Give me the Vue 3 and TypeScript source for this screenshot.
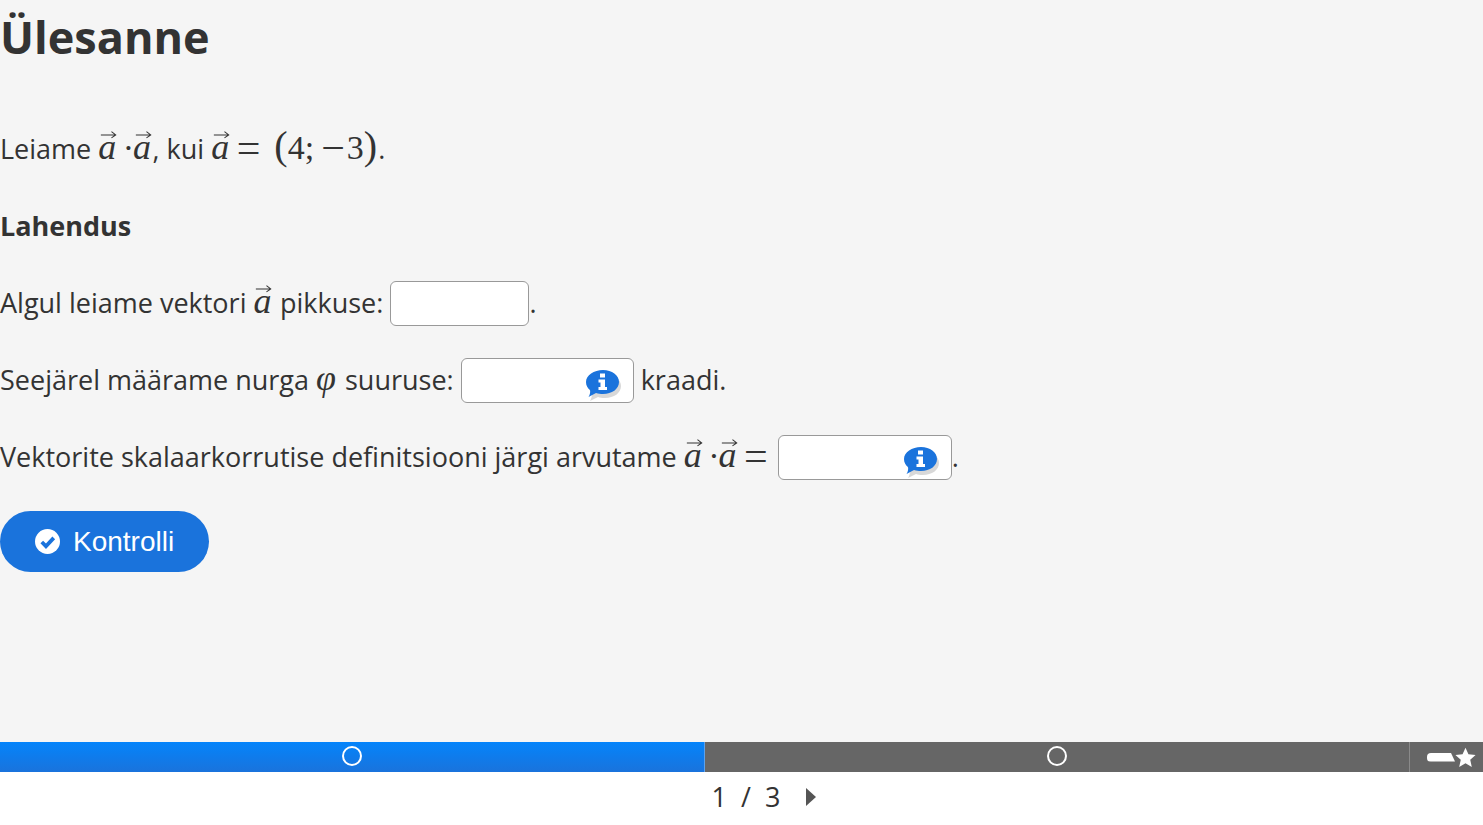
<template>
  <div class="page">
    <main class="content">
      <h1>Ülesanne</h1>

      <p class="line first">
        Leiame
        <span class="math">
          <span class="vec">a<svg viewBox="0 0 20 10"><path d="M1 5.500H18M13.500 1.500 18.500 5.500 13.500 9" /></svg></span>
          <span class="dot">·</span><span class="vec">a<svg viewBox="0 0 20 10"><path d="M1 5.500H18M13.500 1.500 18.500 5.500 13.500 9" /></svg></span></span>, kui
        <span class="math">
          <span class="vec">a<svg viewBox="0 0 20 10"><path d="M1 5.500H18M13.500 1.500 18.500 5.500 13.500 9" /></svg></span>
          <span class="eq">=</span>
          <span class="paren">(</span>4;<span class="minus">−</span>3<span class="paren close">)</span></span>.
      </p>

      <p class="line"><strong>Lahendus</strong></p>

      <p class="line">
        Algul leiame vektori
        <span class="math"><span class="vec">a<svg viewBox="0 0 20 10"><path d="M1 5.500H18M13.500 1.500 18.500 5.500 13.500 9" /></svg></span></span>
        pikkuse:
        <input class="answer short" type="text" /><span>.</span>
      </p>

      <p class="line">
        Seejärel määrame nurga <span class="math"><i class="phi">φ</i></span> suuruse:
        <span class="answer-wrap">
          <input class="answer" type="text" />
          <svg class="info" viewBox="0 0 36 32">
            <path class="info-shadow" d="M20 5C29 5 36 10 36 17S29 29 20 29C17 29 15 28.600 13 28L5 32C6.500 29.500 7 27 7 25C5 23 4 20 4 17 4 10 11 5 20 5Z" />
            <path class="info-bubble" d="M18 1C27 1 34 6 34 13S27 25 18 25C15.500 25 13.500 24.600 11 24L3.500 28C5 25.500 5.500 23 5 21 2.500 19 1 16.500 1 13 1 6 9 1 18 1Z" />
            <path class="info-mark" d="M15 4.500H20V8.500H15ZM13.500 10.500H20V18H22V21H13.500V18H15.500V13.500H13.500Z" />
          </svg>
        </span>
        kraadi.
      </p>

      <p class="line">
        Vektorite skalaarkorrutise definitsiooni järgi arvutame
        <span class="math">
          <span class="vec">a<svg viewBox="0 0 20 10"><path d="M1 5.500H18M13.500 1.500 18.500 5.500 13.500 9" /></svg></span>
          <span class="dot">·</span><span class="vec">a<svg viewBox="0 0 20 10"><path d="M1 5.500H18M13.500 1.500 18.500 5.500 13.500 9" /></svg></span>
          <span class="eq end">=</span></span>
        <span class="answer-wrap">
          <input class="answer wide" type="text" />
          <svg class="info" viewBox="0 0 36 32">
            <path class="info-shadow" d="M20 5C29 5 36 10 36 17S29 29 20 29C17 29 15 28.600 13 28L5 32C6.500 29.500 7 27 7 25C5 23 4 20 4 17 4 10 11 5 20 5Z" />
            <path class="info-bubble" d="M18 1C27 1 34 6 34 13S27 25 18 25C15.500 25 13.500 24.600 11 24L3.500 28C5 25.500 5.500 23 5 21 2.500 19 1 16.500 1 13 1 6 9 1 18 1Z" />
            <path class="info-mark" d="M15 4.500H20V8.500H15ZM13.500 10.500H20V18H22V21H13.500V18H15.500V13.500H13.500Z" />
          </svg>
        </span><span>.</span>
      </p>

      <button class="check" type="button" @click="checked++">
        <svg viewBox="0 0 24 24">
          <circle cx="12" cy="12" r="12" fill="#fff" />
          <path d="M6.500 12.500 10.500 16.500 18 8.500" fill="none" stroke="#1a73dc" stroke-width="3.600" />
        </svg>
        Kontrolli
      </button>
    </main>

    <div class="progress">
      <div v-for="(step, i) in steps" :key="i" class="step" :class="{ active: i === current }">
        <span class="ring"></span>
      </div>
      <div class="reward">
        <span class="pill"></span>
        <svg viewBox="0 0 20 20"><path d="M10 .8 12.800 7 19.600 7.700 14.500 12.200 16 19 10 15.500 4 19 5.500 12.200 .4 7.700 7.200 7Z" /></svg>
      </div>
    </div>

    <nav class="pager">
      <span>{{ current + 1 }}</span>
      <span>/</span>
      <span>{{ total }}</span>
      <svg viewBox="0 0 10 18"><path d="M0 0 10 9 0 18Z" /></svg>
    </nav>
  </div>
</template>

<script setup lang="ts">
import { ref } from 'vue'

const steps = ref(['a', 'b'])
const current = ref(0)
const total = 3
const checked = ref(0)
</script>

<style>
html,
body {
  margin: 0;
  background: #fff;
}
</style>

<style scoped>
.page {
  display: flex;
  flex-direction: column;
  height: 825px;
  overflow: hidden;
  font-family: "Open Sans", sans-serif;
  color: #333;
}

.content {
  flex: 1;
  background: #f5f5f5;
}

h1 {
  margin: 0;
  height: 74px;
  font-size: 45px;
  line-height: 74px;
  font-weight: 700;
}

.line {
  height: 45px;
  margin: 0 0 32px;
  font-size: 27px;
  line-height: 45px;
  white-space: nowrap;
}

.line.first {
  margin-top: 52px;
}

strong {
  font-weight: 700;
}

.math {
  font-family: "Liberation Serif", serif;
  font-size: 34px;
  line-height: 0;
}

.vec {
  position: relative;
  display: inline-block;
  margin-right: 1.500px;
  font-size: 36px;
  font-style: italic;
  line-height: 0;
}

.vec svg {
  position: absolute;
  left: 2px;
  top: -17px;
  width: 17px;
  height: 9px;
}

.vec path {
  fill: none;
  stroke: #333;
  stroke-width: 1.200;
}

.dot {
  margin: 0 -1px 0 5px;
}

.eq {
  position: relative;
  top: 3px;
  margin: 0 14px 0 6px;
  font-size: 42px;
  line-height: 0;
  font-weight: 400;
}

.eq.end {
  margin-right: 10px;
}

.minus {
  position: relative;
  top: 3px;
  margin: 0 2px 0 7px;
  font-size: 42px;
  line-height: 0;
}

.phi {
  margin-right: 2px;
  font-size: 36px;
}

.paren {
  font-size: 40px;
  line-height: 0;
}

.paren.close {
  margin-right: 1px;
}

.answer {
  box-sizing: border-box;
  width: 173px;
  height: 45px;
  margin-bottom: 4px;
  padding: 0 8px;
  vertical-align: middle;
  background: #fff;
  border: 1px solid #999;
  border-radius: 6px;
  outline: none;
}

.answer.short {
  width: 139px;
}

.answer.wide {
  width: 174px;
}

.answer-wrap {
  position: relative;
  display: inline-block;
  line-height: 0;
  vertical-align: middle;
}

.info {
  position: absolute;
  right: 13px;
  top: 11px;
  width: 36px;
  height: 32px;
}

.info-shadow {
  fill: #d8d8d8;
}

.info-bubble {
  fill: #1a73dc;
}

.info-mark {
  fill: #fff;
}

.check {
  display: flex;
  align-items: center;
  gap: 13px;
  width: 209px;
  height: 61px;
  padding: 0 0 0 35px;
  border: 0;
  border-radius: 31px;
  background: #1a73dc;
  color: #fff;
  font-family: "Liberation Sans", sans-serif;
  font-size: 28px;
  cursor: pointer;
}

.check svg {
  width: 25px;
  height: 25px;
}

.progress {
  display: flex;
  height: 30px;
  background: #666;
}

.step {
  display: flex;
  flex: none;
  align-items: center;
  justify-content: center;
  box-sizing: border-box;
  width: 705px;
  padding-bottom: 2px;
  border-right: 1px solid #8a8a8a;
}

.step.active {
  background: linear-gradient(#0484fb, #1a73dc);
  border-right-color: #5ba2ee;
}

.ring {
  box-sizing: border-box;
  width: 20px;
  height: 20px;
  border: 2px solid #fff;
  border-radius: 50%;
}

.reward {
  display: flex;
  flex: 1;
  align-items: center;
  padding-left: 17px;
}

.pill {
  width: 28px;
  height: 9px;
  border-radius: 4px 0 0 4px;
  background: #fff;
  clip-path: polygon(0 0, 85% 0, 100% 100%, 0 100%);
}

.reward svg {
  width: 21px;
  height: 21px;
  fill: #fff;
}

.pager {
  display: flex;
  flex: none;
  align-items: center;
  justify-content: center;
  gap: 14px;
  box-sizing: border-box;
  height: 53px;
  padding: 0 0 4px 45px;
  background: #fff;
  font-size: 27px;
}

.pager svg {
  width: 10px;
  height: 18px;
  margin-left: 12px;
  fill: #555;
}
</style>
